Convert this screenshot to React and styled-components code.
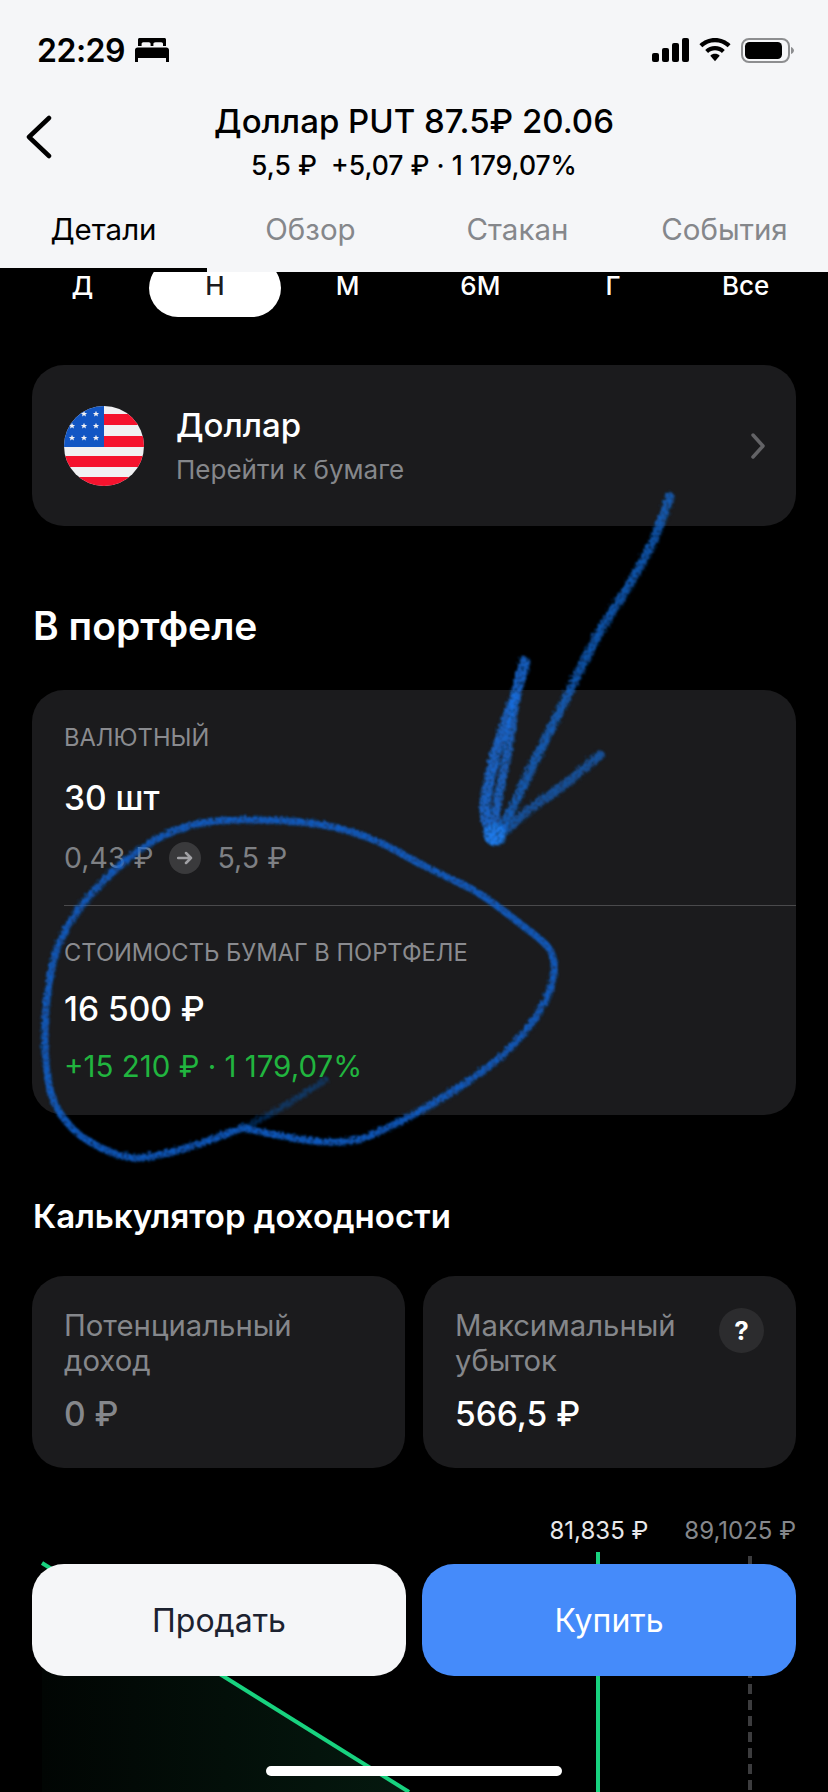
import React from 'react';
import styled, { createGlobalStyle } from 'styled-components';

const GlobalStyle = createGlobalStyle`
  html, body {
    margin: 0;
    padding: 0;
    background: #000;
  }
  * {
    box-sizing: border-box;
  }
`;

const periods = ['Д', 'Н', 'М', '6М', 'Г', 'Все'];
const tabs = ['Детали', 'Обзор', 'Стакан', 'События'];

// points of the hand drawn marks, read off the screenshot
const ring = [
  [243, 1128], [305, 1140], [357, 1140], [409, 1117], [460, 1087], [505, 1053], [536, 1017], [553, 980],
  [550, 950], [519, 923], [478, 893], [426, 867], [374, 840], [323, 825], [254, 820], [202, 823],
  [161, 837], [123, 863], [89, 897], [64, 933], [51, 973], [45, 1033], [51, 1093], [71, 1127],
  [99, 1147], [133, 1158], [168, 1153], [202, 1143], [243, 1128],
];
const ringTail = [[243, 1128], [278, 1110], [326, 1080]];
const arrowLong = [[670, 497], [655, 537], [634, 577], [597, 637], [567, 697], [537, 757], [513, 807], [497, 838]];
const arrowMid = [[525, 662], [515, 697], [497, 750], [485, 807], [493, 838]];
const arrowMidBack = [[515, 697], [510, 740], [497, 807], [495, 838]];
const arrowShort = [[600, 755], [567, 783], [533, 807], [497, 838]];

const toPath = (pts) => {
  let d = `M${pts[0][0]} ${pts[0][1]}`;
  for (let i = 0; i < pts.length - 1; i++) {
    const p0 = pts[i - 1] || pts[i];
    const p1 = pts[i];
    const p2 = pts[i + 1];
    const p3 = pts[i + 2] || p2;
    const c1 = [p1[0] + (p2[0] - p0[0]) / 6, p1[1] + (p2[1] - p0[1]) / 6];
    const c2 = [p2[0] - (p3[0] - p1[0]) / 6, p2[1] - (p3[1] - p1[1]) / 6];
    d += ` C${c1[0]} ${c1[1]} ${c2[0]} ${c2[1]} ${p2[0]} ${p2[1]}`;
  }
  return d;
};

const Screen = styled.div`
  position: relative;
  width: 828px;
  height: 1792px;
  overflow: hidden;
  background: #000;
  font-family: Inter, "Noto Sans", sans-serif;
  color: #fff;
`;

const Header = styled.header`
  height: 272px;
  background: #f5f6f8;
  color: #000;
  display: flex;
  flex-direction: column;
`;

const StatusBar = styled.div`
  height: 100px;
  padding: 0 34px 0 37px;
  display: flex;
  align-items: center;
  justify-content: space-between;
`;

const Clock = styled.div`
  display: flex;
  align-items: center;
  gap: 10px;
  font-size: 32px;
  font-weight: 600;
  letter-spacing: -0.5px;
`;

const StatusIcons = styled.div`
  display: flex;
  align-items: center;
  gap: 10px;
`;

const Nav = styled.div`
  position: relative;
  height: 90px;
  padding-bottom: 7px;
  display: flex;
  flex-direction: column;
  align-items: center;
  justify-content: center;
  gap: 12px;
`;

const BackButton = styled.svg`
  position: absolute;
  left: 25px;
  top: 15px;
`;

const NavTitle = styled.div`
  font-size: 33px;
  font-weight: 500;
  line-height: 34px;
`;

const NavSub = styled.div`
  font-size: 26.5px;
  font-weight: 500;
  line-height: 30px;
  white-space: pre;
`;

const Tabs = styled.div`
  flex: 1;
  display: grid;
  grid-template-columns: repeat(4, 1fr);
`;

const Tab = styled.div`
  display: flex;
  align-items: center;
  justify-content: center;
  font-size: 29.500px;
  color: ${(p) => (p.$active ? '#000' : '#85878b')};
  border-bottom: 4px solid ${(p) => (p.$active ? '#000' : 'transparent')};
`;

const Content = styled.main`
  height: 1520px;
  overflow: hidden;
  display: flex;
  flex-direction: column;
`;

const Periods = styled.div`
  margin: -13px 16px 0;
  display: grid;
  grid-template-columns: repeat(6, 1fr);
`;

const Period = styled.div`
  height: 58px;
  padding-bottom: 6px;
  display: flex;
  align-items: center;
  justify-content: center;
  font-size: 26px;
  font-weight: 500;
  border-radius: 29px;
  background: ${(p) => (p.$active ? '#fff' : 'transparent')};
  color: ${(p) => (p.$active ? '#1c1c1e' : '#fff')};
`;

const Card = styled.section`
  margin: 0 32px;
  border-radius: 32px;
  background: #1b1b1d;
`;

const BondCard = styled(Card)`
  margin-top: 48px;
  height: 161px;
  padding: 0 30px 0 32px;
  display: flex;
  align-items: center;
`;

const BondText = styled.div`
  flex: 1;
  margin-left: 32px;
`;

const BondName = styled.div`
  font-size: 33px;
  font-weight: 500;
  line-height: 40px;
  margin-bottom: 9px;
`;

const BondHint = styled.div`
  font-size: 26px;
  line-height: 32px;
  color: #85878b;
`;

const SectionTitle = styled.h2`
  margin: ${(p) => p.$top}px 0 0;
  padding-left: 33px;
  font-size: ${(p) => p.$size}px;
  font-weight: 600;
  line-height: 44px;
`;

const HoldingsCard = styled(Card)`
  margin-top: 42px;
  height: 425px;
  display: flex;
  flex-direction: column;
`;

const HoldingsRow = styled.div`
  flex: ${(p) => p.$grow};
  margin-left: 32px;
  padding-top: ${(p) => p.$top}px;
  border-top: ${(p) => (p.$divider ? '1px solid #4a4a4c' : 'none')};
`;

const Caption = styled.div`
  font-size: 23.700px;
  line-height: 30px;
  color: #8a8b8f;
`;

const Amount = styled.div`
  margin-top: ${(p) => p.$top}px;
  font-size: 33.500px;
  font-weight: 500;
  line-height: 40px;
`;

const PriceLine = styled.div`
  margin-top: ${(p) => p.$top}px;
  display: flex;
  align-items: center;
  gap: 16px;
  font-size: ${(p) => (p.$positive ? 29.5 : 28.5)}px;
  line-height: 36px;
  color: ${(p) => (p.$positive ? '#21b53f' : '#7e8084')};
`;

const ArrowChip = styled.span`
  width: 32px;
  height: 32px;
  border-radius: 50%;
  background: #3a3a3c;
  display: flex;
  align-items: center;
  justify-content: center;
`;

const CalcGrid = styled.div`
  margin: 38px 32px 0;
  display: grid;
  grid-template-columns: 373px 373px;
  justify-content: space-between;
`;

const CalcCard = styled.div`
  position: relative;
  height: 192px;
  padding: 32px 32px 0;
  border-radius: 32px;
  background: #1b1b1d;
`;

const CalcLabel = styled.div`
  font-size: 29.300px;
  line-height: 35px;
  color: #85878b;
`;

const CalcValue = styled.div`
  margin-top: 16px;
  font-size: 33.500px;
  font-weight: 500;
  line-height: 40px;
  color: ${(p) => (p.$muted ? '#85878b' : '#fff')};
`;

const HelpBadge = styled.span`
  position: absolute;
  top: 32px;
  right: 32px;
  width: 45px;
  height: 45px;
  border-radius: 50%;
  background: #2c2c2e;
  display: flex;
  align-items: center;
  justify-content: center;
  font-size: 26px;
  font-weight: 700;
`;

const ChartLabels = styled.div`
  margin: 48px 32px 0;
  display: flex;
  justify-content: flex-end;
  gap: 36px;
  font-size: 24px;
  line-height: 30px;
`;

const ChartLabel = styled.span`
  color: ${(p) => (p.$muted ? '#85878b' : '#e8e8ea')};
`;

const ChartArea = styled.svg`
  display: block;
  margin-top: 6px;
  flex-shrink: 0;
`;

const Actions = styled.div`
  position: absolute;
  left: 32px;
  right: 32px;
  top: 1564px;
  display: grid;
  grid-template-columns: 374px 374px;
  justify-content: space-between;
`;

const ActionButton = styled.button`
  height: 112px;
  border: none;
  border-radius: 32px;
  font-family: inherit;
  font-size: 32px;
  background: ${(p) => (p.$primary ? '#458bfa' : '#f5f6f8')};
  color: ${(p) => (p.$primary ? '#fff' : '#1c2230')};
`;

const HomeIndicator = styled.div`
  position: absolute;
  left: 266px;
  bottom: 16px;
  width: 296px;
  height: 10px;
  border-radius: 5px;
  background: #fff;
`;

const Scribble = styled.svg`
  position: absolute;
  left: 0;
  top: 0;
  pointer-events: none;
`;

const BedIcon = () => (
  <svg width="34" height="24" viewBox="0 0 34 24" fill="#000">
    <path d="M3 1.5C3 .7 3.7 0 4.5 0h25c.8 0 1.5.7 1.500 1.500V8h-3V6c0-1-.7-1.700-1.700-1.700h-5.600C19 4.300 18.400 5 18.400 6v2h-2.800V6c0-1-.7-1.700-1.700-1.700H8.300C7.300 4.300 6.600 5 6.600 6v2H3z" />
    <path d="M2.500 9.500h29c1.400 0 2.500 1.100 2.500 2.500v12h-3v-4H3v4H0V12c0-1.400 1.100-2.500 2.500-2.500z" />
  </svg>
);

const SignalIcon = () => (
  <svg width="37" height="24" viewBox="0 0 37 24" fill="#000">
    <rect x="0" y="15" width="7" height="9" rx="2" />
    <rect x="10" y="10" width="7" height="14" rx="2" />
    <rect x="20" y="5" width="7" height="19" rx="2" />
    <rect x="30" y="0" width="7" height="24" rx="2" />
  </svg>
);

const WifiIcon = () => (
  <svg width="32" height="24" viewBox="0 0 33 25" fill="#000">
    <path d="M16.500 0C10.200 0 4.500 2.500.3 6.500l3 3.200C6.700 6.400 11.400 4.400 16.500 4.400s9.800 2 13.200 5.300l3-3.200C28.500 2.500 22.800 0 16.500 0z" />
    <path d="M16.500 8.400c-3.900 0-7.500 1.500-10.200 4.100l3 3.200c1.900-1.800 4.400-2.900 7.200-2.900s5.300 1.100 7.200 2.900l3-3.200C24 9.900 20.400 8.400 16.500 8.400z" />
    <path d="M16.500 16.500c-1.900 0-3.600.7-4.900 2l4.900 5.800 4.900-5.800c-1.300-1.300-3-2-4.900-2z" />
  </svg>
);

const BatteryIcon = () => (
  <svg width="53" height="25" viewBox="0 0 53 25">
    <rect x="1" y="1" width="47" height="23" rx="7" fill="none" stroke="#8d8e90" strokeWidth="2" />
    <rect x="4" y="4" width="37" height="17" rx="4.500" fill="#000" />
    <path d="M50 9v7c1.500-.5 3-2 3-3.500S51.500 9.500 50 9z" fill="#8d8e90" />
  </svg>
);

const star = 'M0 -3.200 L.9 -1 L3.100 -1 L1.400 .4 L2 2.600 L0 1.300 L-2 2.600 L-1.400 .4 L-3.100 -1 L-.9 -1 Z';

const UsFlag = () => (
  <svg width="80" height="80" viewBox="0 0 80 80" style={{ flexShrink: 0 }}>
    <defs>
      <clipPath id="flag-clip">
        <circle cx="40" cy="40" r="40" />
      </clipPath>
    </defs>
    <g clipPath="url(#flag-clip)">
      <rect width="80" height="80" fill="#f1f1f3" />
      <rect x="40" y="8" width="40" height="11" fill="#f5132e" />
      <rect x="40" y="30" width="40" height="11" fill="#f5132e" />
      <rect y="50" width="80" height="11" fill="#f5132e" />
      <rect y="71" width="80" height="11" fill="#f5132e" />
      <rect width="40" height="41" fill="#1256c4" />
      {[[20, 8], [32, 8], [8, 20], [20, 20], [32, 20], [8, 32], [20, 32], [32, 32]].map(([x, y]) => (
        <path key={`${x}-${y}`} d={star} transform={`translate(${x} ${y})`} fill="#f1f1f3" />
      ))}
    </g>
  </svg>
);

const App = () => (
  <Screen>
    <GlobalStyle />
    <Header>
      <StatusBar>
        <Clock>
          22:29
          <BedIcon />
        </Clock>
        <StatusIcons>
          <SignalIcon />
          <WifiIcon />
          <BatteryIcon />
        </StatusIcons>
      </StatusBar>
      <Nav>
        <BackButton width="28" height="44" viewBox="0 0 28 44" fill="none">
          <path d="M24 3 L4 22 L24 41" stroke="#000" strokeWidth="4.500" strokeLinecap="round" strokeLinejoin="round" />
        </BackButton>
        <NavTitle>Доллар PUT 87.5₽ 20.06</NavTitle>
        <NavSub>5,5 ₽  +5,07 ₽ · 1 179,07%</NavSub>
      </Nav>
      <Tabs>
        {tabs.map((t, i) => (
          <Tab key={t} $active={i === 0}>{t}</Tab>
        ))}
      </Tabs>
    </Header>

    <Content>
      <Periods>
        {periods.map((p) => (
          <Period key={p} $active={p === 'Н'}>{p}</Period>
        ))}
      </Periods>

      <BondCard>
        <UsFlag />
        <BondText>
          <BondName>Доллар</BondName>
          <BondHint>Перейти к бумаге</BondHint>
        </BondText>
        <svg width="16" height="26" viewBox="0 0 16 26" fill="none">
          <path d="M3 2 L13 13 L3 24" stroke="#636366" strokeWidth="3.500" strokeLinecap="round" strokeLinejoin="round" />
        </svg>
      </BondCard>

      <SectionTitle $size={39} $top={78}>В портфеле</SectionTitle>

      <HoldingsCard>
        <HoldingsRow $grow="0 0 215px" $top={33}>
          <Caption>ВАЛЮТНЫЙ</Caption>
          <Amount $top={25}>30 шт</Amount>
          <PriceLine $top={22}>
            0,43 ₽
            <ArrowChip>
              <svg width="16" height="14" viewBox="0 0 16 14" fill="none">
                <path d="M1 7 H14 M9 2 L14 7 L9 12" stroke="#a0a0a4" strokeWidth="2.500" strokeLinecap="round" strokeLinejoin="round" />
              </svg>
            </ArrowChip>
            5,5 ₽
          </PriceLine>
        </HoldingsRow>
        <HoldingsRow $grow="1" $top={32} $divider>
          <Caption>СТОИМОСТЬ БУМАГ В ПОРТФЕЛЕ</Caption>
          <Amount $top={21}>16 500 ₽</Amount>
          <PriceLine $top={19} $positive>+15 210 ₽ · 1 179,07%</PriceLine>
        </HoldingsRow>
      </HoldingsCard>

      <SectionTitle $size={33} $top={79}>Калькулятор доходности</SectionTitle>

      <CalcGrid>
        <CalcCard>
          <CalcLabel>Потенциальный<br />доход</CalcLabel>
          <CalcValue $muted>0 ₽</CalcValue>
        </CalcCard>
        <CalcCard>
          <CalcLabel>Максимальный<br />убыток</CalcLabel>
          <CalcValue>566,5 ₽</CalcValue>
          <HelpBadge>?</HelpBadge>
        </CalcCard>
      </CalcGrid>

      <ChartLabels>
        <ChartLabel>81,835 ₽</ChartLabel>
        <ChartLabel $muted>89,1025 ₽</ChartLabel>
      </ChartLabels>

      <ChartArea width="828" height="240" viewBox="0 1552 828 240">
        <defs>
          <linearGradient id="profit" x1="0" y1="0" x2="1" y2="0">
            <stop offset="0" stopColor="#010503" />
            <stop offset="1" stopColor="#05190f" />
          </linearGradient>
        </defs>
        <path d="M42 1563 L409 1792 L42 1792 Z" fill="url(#profit)" />
        <path d="M42 1563 L409 1792" stroke="#18d27f" strokeWidth="4" />
        <path d="M598 1552 V1792" stroke="#18d27f" strokeWidth="4" />
        <path d="M750 1556 V1792" stroke="#3c3c3e" strokeWidth="4" strokeDasharray="10 6" />
      </ChartArea>
    </Content>

    <Actions>
      <ActionButton>Продать</ActionButton>
      <ActionButton $primary>Купить</ActionButton>
    </Actions>
    <HomeIndicator />

    <Scribble width="828" height="1792" viewBox="0 0 828 1792" fill="none">
      <defs>
        <filter id="rough" x="-10%" y="-10%" width="120%" height="120%">
          <feTurbulence type="fractalNoise" baseFrequency="0.45" numOctaves="2" seed="4" result="noise" />
          <feDisplacementMap in="SourceGraphic" in2="noise" scale="7" result="moved" />
          <feColorMatrix in="noise" type="matrix" values="0 0 0 0 0 0 0 0 0 0 0 0 0 0 0 0 0 0 3 -0.5" result="grain" />
          <feComposite in="moved" in2="grain" operator="in" result="grainy" />
          <feGaussianBlur in="grainy" stdDeviation="0.8" />
        </filter>
      </defs>
      <g filter="url(#rough)" strokeLinecap="round" strokeLinejoin="round">
        <g stroke="#0f63d2">
          <path d={toPath(ring)} strokeWidth="7" opacity="0.9" />
          <path d={toPath(ringTail)} strokeWidth="6" opacity="0.4" />
        </g>
        <g stroke="#1670e4">
          <path d={toPath(arrowLong)} strokeWidth="9" opacity="0.75" />
          <path d={toPath(arrowMid)} strokeWidth="11" opacity="0.85" />
          <path d={toPath(arrowMidBack)} strokeWidth="9" opacity="0.8" />
          <path d={toPath(arrowShort)} strokeWidth="9" opacity="0.65" />
        </g>
        <circle cx="495" cy="835" r="11" fill="#1a7bee" />
      </g>
    </Scribble>
  </Screen>
);

export default App;
